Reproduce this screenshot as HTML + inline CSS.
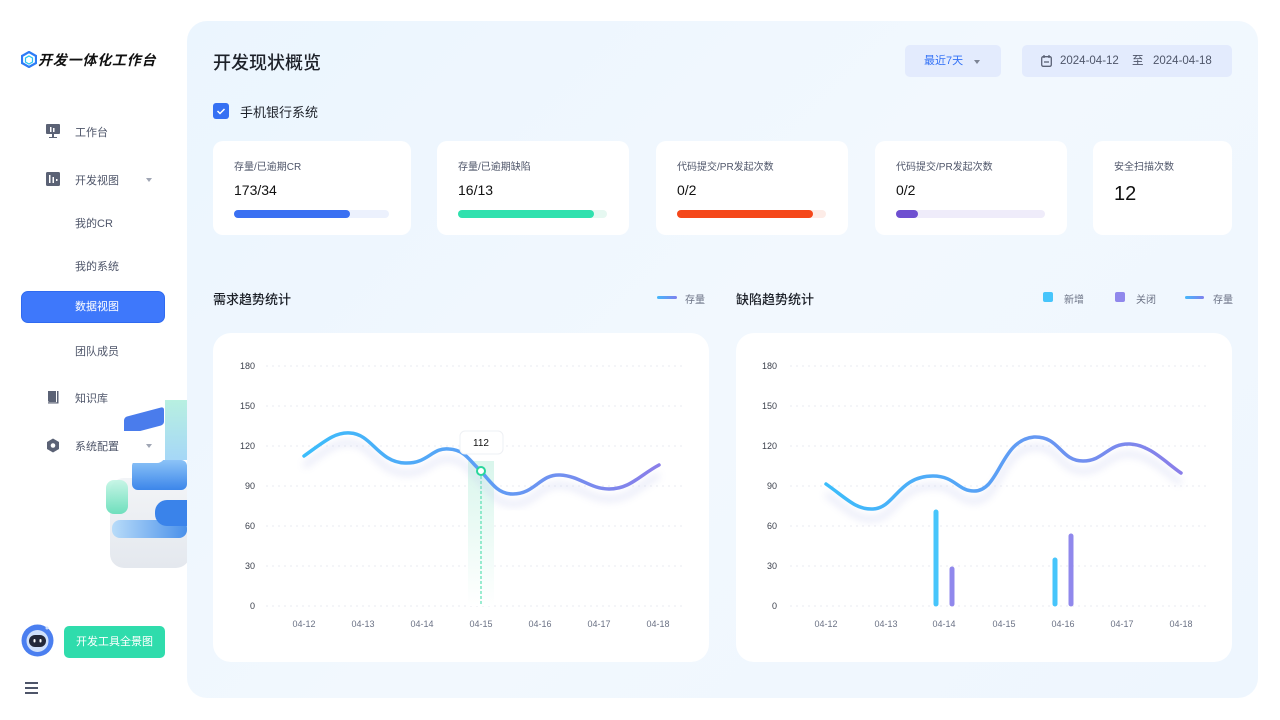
<!DOCTYPE html>
<html><head><meta charset="utf-8">
<style>
*{margin:0;padding:0;box-sizing:border-box}
body{width:1280px;height:720px;background:#fff;font-family:"Liberation Sans","Noto Sans CJK SC",sans-serif;position:relative;overflow:hidden;color:#1d2129}
.abs{position:absolute}
.nav{position:absolute;left:75px;font-size:11px;color:#4e5569}
.main{position:absolute;left:187px;top:21px;width:1071px;height:677px;border-radius:20px;background:linear-gradient(135deg,#ebf5fe,#f2f8fe 50%,#eef6fe)}
.card{position:absolute;background:#fff;border-radius:10px;top:141px;height:94px}
.card .t{position:absolute;left:21px;top:17px;font-size:10px;color:#4e5569}
.card .v{position:absolute;left:21px;top:41px;font-size:14px;color:#111}
.card .bar{position:absolute;left:21px;top:69px;height:8px;border-radius:4px}
.card .fill{position:absolute;left:0;top:0;height:8px;border-radius:4px}
.chart{position:absolute;top:333px;width:496px;height:329px;background:#fff;border-radius:18px}
</style></head><body>
<svg class="abs" style="left:21px;top:51px" width="16" height="17" viewBox="0 0 16 17"><polygon points="8,1 15,5 15,12 8,16 1,12 1,5" fill="none" stroke="#2d7cf6" stroke-width="2.2"/><polygon points="8,5 11.5,7 11.5,11 8,13 4.5,11 4.5,7" fill="#fff" stroke="#29c6f0" stroke-width="1.2"/></svg>
<div class="abs" style="left:38px;top:50px;font-size:14px;font-weight:bold;font-style:italic;color:#111;letter-spacing:0.8px">开发一体化工作台</div>

<svg class="abs" style="left:46px;top:124px" width="14" height="14" viewBox="0 0 14 14"><rect x="0" y="0" width="14" height="10" rx="1" fill="#5b6275"/><rect x="6" y="10" width="2" height="3" fill="#5b6275"/><rect x="3" y="13" width="8" height="1" fill="#5b6275"/><rect x="4" y="3" width="1.5" height="5" fill="#fff"/><rect x="7" y="4" width="1.5" height="4" fill="#fff"/></svg>
<div class="nav" style="top:124px">工作台</div>
<svg class="abs" style="left:46px;top:172px" width="14" height="14" viewBox="0 0 14 14"><rect width="14" height="14" rx="1.5" fill="#5b6275"/><rect x="3" y="3" width="1.5" height="8" fill="#fff"/><rect x="6.5" y="5" width="1.5" height="6" fill="#fff"/><rect x="10" y="7" width="1.5" height="2" fill="#fff"/></svg>
<div class="nav" style="top:172px">开发视图</div>
<div class="abs" style="left:146px;top:178px;width:0;height:0;border-left:3.5px solid transparent;border-right:3.5px solid transparent;border-top:4px solid #a0a6b4"></div>
<div class="nav" style="top:215px">我的CR</div>
<div class="nav" style="top:258px">我的系统</div>
<div class="abs" style="left:21px;top:291px;width:144px;height:32px;background:#3e78fb;border-radius:7px;border:1px solid #2f6af0;color:#fff;font-size:11px;line-height:30px;padding-left:53px">数据视图</div>
<div class="nav" style="top:343px">团队成员</div>

<!-- 3D decoration -->
<div class="abs" style="left:110px;top:478px;width:80px;height:90px;border-radius:14px;background:linear-gradient(180deg,#f2f4f7,#e4e8ee);"></div>
<div class="abs" style="left:112px;top:520px;width:75px;height:18px;border-radius:8px;background:linear-gradient(90deg,#b8dcf9,#4a90ea)"></div>
<div class="abs" style="left:106px;top:480px;width:22px;height:34px;border-radius:8px;background:linear-gradient(180deg,#bff5e3,#58dcb3);opacity:.85"></div>
<div class="abs" style="left:155px;top:500px;width:32px;height:26px;border-radius:12px 0 0 12px;background:#3a83ea"></div>
<div class="abs" style="left:132px;top:460px;width:55px;height:30px;background:linear-gradient(180deg,#8cc3f7,#3c86ea);border-radius:6px"></div>
<div class="abs" style="left:124px;top:412px;width:40px;height:18px;background:#4a7cec;transform:skewY(-15deg);border-radius:3px"></div>
<div class="abs" style="left:165px;top:400px;width:22px;height:60px;background:linear-gradient(180deg,#a6ecd9,#8fcdf5);opacity:.8"></div>
<div class="abs" style="left:100px;top:431px;width:65px;height:32px;background:#fff;border-radius:0 0 8px 8px"></div>

<svg class="abs" style="left:46px;top:390px" width="14" height="14" viewBox="0 0 14 14"><path d="M2 1h8v11H3.5A1.5 1.5 0 0 1 2 10.5z" fill="#5b6275"/><rect x="11" y="1" width="1.5" height="12" fill="#5b6275"/><rect x="2" y="12.3" width="10.5" height="1.2" fill="#5b6275"/></svg>
<div class="nav" style="top:390px">知识库</div>
<svg class="abs" style="left:46px;top:438px" width="14" height="15" viewBox="0 0 14 15"><polygon points="7,0.5 13,4 13,11 7,14.5 1,11 1,4" fill="#5b6275"/><circle cx="7" cy="7.5" r="2.3" fill="#fff"/></svg>
<div class="nav" style="top:438px">系统配置</div>
<div class="abs" style="left:146px;top:444px;width:0;height:0;border-left:3.5px solid transparent;border-right:3.5px solid transparent;border-top:4px solid #a0a6b4"></div>

<svg class="abs" style="left:21px;top:624px" width="33" height="33" viewBox="0 0 33 33"><circle cx="16.5" cy="16.5" r="16" fill="#4b7ff0"/><circle cx="16.5" cy="17" r="11" fill="#cfe0fb"/><rect x="8" y="11" width="17" height="12" rx="6" fill="#23283a"/><rect x="12.5" y="15" width="2" height="3.5" rx="1" fill="#fff"/><rect x="18.5" y="15" width="2" height="3.5" rx="1" fill="#fff"/><circle cx="26" cy="4" r="1.5" fill="#cfe0fb"/></svg>
<div class="abs" style="left:64px;top:626px;width:101px;height:32px;background:#2fdcac;border-radius:5px;color:#fff;font-size:11px;text-align:center;line-height:32px">开发工具全景图</div>
<div class="abs" style="left:25px;top:682px;width:13px;height:1.5px;background:#4e5569;box-shadow:0 5px 0 #4e5569,0 10px 0 #4e5569"></div>

<div class="main"></div>
<div class="abs" style="left:213px;top:49px;font-size:18px;font-weight:500;color:#1d2129">开发现状概览</div>
<div class="abs" style="left:905px;top:45px;width:96px;height:32px;background:#e3ebfd;border-radius:5px;font-size:11px;color:#3170f6;line-height:32px;padding-left:19px">最近7天</div>
<div class="abs" style="left:974px;top:60px;border-left:3.5px solid transparent;border-right:3.5px solid transparent;border-top:4px solid #7d8494"></div>
<div class="abs" style="left:1022px;top:45px;width:210px;height:32px;background:#e3ebfd;border-radius:5px;font-size:11.5px;color:#4e5569;line-height:32px">
<svg class="abs" style="left:19px;top:10px" width="11" height="12" viewBox="0 0 11 12"><rect x="0.7" y="1.7" width="9.6" height="9.6" rx="1.5" fill="none" stroke="#5b6275" stroke-width="1.3"/><line x1="3" y1="0" x2="3" y2="3" stroke="#5b6275" stroke-width="1.3"/><line x1="8" y1="0" x2="8" y2="3" stroke="#5b6275" stroke-width="1.3"/><line x1="3" y1="7" x2="8" y2="7" stroke="#5b6275" stroke-width="1.3"/></svg>
<span class="abs" style="left:38px">2024-04-12</span><span class="abs" style="left:110px">至</span><span class="abs" style="left:131px">2024-04-18</span></div>

<div class="abs" style="left:213px;top:103px;width:16px;height:16px;border-radius:3px;background:#3570f3"><svg width="16" height="16"><path d="M4.5 8l2.5 2.5 4.5-4.5" fill="none" stroke="#fff" stroke-width="1.5"/></svg></div>
<div class="abs" style="left:240px;top:102px;font-size:13px;color:#1d2129">手机银行系统</div>

<div class="card" style="left:213px;width:198px"><div class="t">存量/已逾期CR</div><div class="v">173/34</div><div class="bar" style="width:155px;background:#ecf1fd"><div class="fill" style="width:116px;background:#3a70f2"></div></div></div>
<div class="card" style="left:437px;width:192px"><div class="t">存量/已逾期缺陷</div><div class="v">16/13</div><div class="bar" style="width:149px;background:#e6f8f1"><div class="fill" style="width:136px;background:#30e1ae"></div></div></div>
<div class="card" style="left:656px;width:192px"><div class="t">代码提交/PR发起次数</div><div class="v">0/2</div><div class="bar" style="width:149px;background:#fdece7"><div class="fill" style="width:136px;background:#f5471a"></div></div></div>
<div class="card" style="left:875px;width:192px"><div class="t">代码提交/PR发起次数</div><div class="v">0/2</div><div class="bar" style="width:149px;background:#efecfa"><div class="fill" style="width:22px;background:#6e4fd0"></div></div></div>
<div class="card" style="left:1093px;width:139px"><div class="t">安全扫描次数</div><div class="v" style="font-size:20px;top:42px">12</div></div>

<div class="abs" style="left:213px;top:289px;font-size:13px;font-weight:500">需求趋势统计</div>
<div class="abs" style="left:657px;top:296px;width:20px;height:3px;border-radius:2px;background:linear-gradient(90deg,#45b8fb,#7f80ee)"></div>
<div class="abs" style="left:685px;top:291px;font-size:10px;color:#6b7285">存量</div>
<div class="abs" style="left:736px;top:289px;font-size:13px;font-weight:500">缺陷趋势统计</div>
<div class="abs" style="left:1043px;top:292px;width:10px;height:10px;border-radius:2px;background:#47c5fb"></div>
<div class="abs" style="left:1064px;top:291px;font-size:10px;color:#6b7285">新增</div>
<div class="abs" style="left:1115px;top:292px;width:10px;height:10px;border-radius:2px;background:#9088ec"></div>
<div class="abs" style="left:1136px;top:291px;font-size:10px;color:#6b7285">关闭</div>
<div class="abs" style="left:1185px;top:296px;width:19px;height:3px;border-radius:2px;background:linear-gradient(90deg,#45b8fb,#7f80ee)"></div>
<div class="abs" style="left:1213px;top:291px;font-size:10px;color:#6b7285">存量</div>

<div class="chart" style="left:213px"></div>
<div class="chart" style="left:736px"></div>

<svg class="abs" style="left:0;top:0" width="1280" height="720" font-family="Liberation Sans, sans-serif" font-size="9">
<defs>
<linearGradient id="lg" x1="0" x2="1"><stop offset="0" stop-color="#3cbdfb"/><stop offset="0.5" stop-color="#5d9ef5"/><stop offset="1" stop-color="#8a7ee9"/></linearGradient>
<linearGradient id="hg" x1="0" y1="0" x2="0" y2="1"><stop offset="0" stop-color="#d9f6ec"/><stop offset="1" stop-color="#fff"/></linearGradient>
<filter id="bl"><feGaussianBlur stdDeviation="4"/></filter>
</defs>
<g stroke="#e9ebf0" stroke-dasharray="2 4" stroke-width="1">
<line x1="266" y1="366" x2="684" y2="366"/><line x1="266" y1="406" x2="684" y2="406"/><line x1="266" y1="446" x2="684" y2="446"/><line x1="266" y1="486" x2="684" y2="486"/><line x1="266" y1="526" x2="684" y2="526"/><line x1="266" y1="566" x2="684" y2="566"/><line x1="266" y1="606" x2="684" y2="606"/>
<line x1="790" y1="366" x2="1206" y2="366"/><line x1="790" y1="406" x2="1206" y2="406"/><line x1="790" y1="446" x2="1206" y2="446"/><line x1="790" y1="486" x2="1206" y2="486"/><line x1="790" y1="526" x2="1206" y2="526"/><line x1="790" y1="566" x2="1206" y2="566"/><line x1="790" y1="606" x2="1206" y2="606"/>
</g>
<g fill="#3a3f4b" text-anchor="end">
<text x="255" y="369">180</text><text x="255" y="409">150</text><text x="255" y="449">120</text><text x="255" y="489">90</text><text x="255" y="529">60</text><text x="255" y="569">30</text><text x="255" y="609">0</text>
<text x="777" y="369">180</text><text x="777" y="409">150</text><text x="777" y="449">120</text><text x="777" y="489">90</text><text x="777" y="529">60</text><text x="777" y="569">30</text><text x="777" y="609">0</text>
</g>
<g fill="#6b7285" text-anchor="middle">
<text x="304" y="627">04-12</text><text x="363" y="627">04-13</text><text x="422" y="627">04-14</text><text x="481" y="627">04-15</text><text x="540" y="627">04-16</text><text x="599" y="627">04-17</text><text x="658" y="627">04-18</text>
<text x="826" y="627">04-12</text><text x="886" y="627">04-13</text><text x="944" y="627">04-14</text><text x="1004" y="627">04-15</text><text x="1063" y="627">04-16</text><text x="1122" y="627">04-17</text><text x="1181" y="627">04-18</text>
</g>
<rect x="468" y="461" width="26" height="145" fill="url(#hg)"/>
<line x1="481" y1="471" x2="481" y2="606" stroke="#38d9a4" stroke-dasharray="3 2"/>
<path d="M304 456 C325 441 335 432 350 433 C372 434 378 462 405 463 C428 464 432 447 449 449 C466 450 470 462 481 471 C494 487 500 494 513 494 C535 494 540 474 560 475 C580 476 590 489 609 489 C630 489 640 475 659 465" fill="none" stroke="#c6cbef" stroke-width="5" filter="url(#bl)" transform="translate(0,10)" opacity=".45"/>
<path d="M304 456 C325 441 335 432 350 433 C372 434 378 462 405 463 C428 464 432 447 449 449 C466 450 470 462 481 471 C494 487 500 494 513 494 C535 494 540 474 560 475 C580 476 590 489 609 489 C630 489 640 475 659 465" fill="none" stroke="url(#lg)" stroke-width="3.5" stroke-linecap="round"/>
<circle cx="481" cy="471" r="4" fill="#fff" stroke="#28d69b" stroke-width="2"/>
<rect x="460" y="431" width="43" height="23" rx="5" fill="#fff" stroke="#eef0f4"/>
<text x="481" y="446" text-anchor="middle" font-size="10" fill="#111">112</text>
<path d="M826 484 C846 498 856 510 873 509 C895 508 898 476 933 476 C955 476 958 491 974 491 C1000 491 1000 440 1034 437 C1060 436 1060 461 1083 461 C1104 461 1108 443 1130 444 C1150 445 1165 462 1181 473" fill="none" stroke="#c6cbef" stroke-width="5" filter="url(#bl)" transform="translate(0,10)" opacity=".45"/>
<path d="M826 484 C846 498 856 510 873 509 C895 508 898 476 933 476 C955 476 958 491 974 491 C1000 491 1000 440 1034 437 C1060 436 1060 461 1083 461 C1104 461 1108 443 1130 444 C1150 445 1165 462 1181 473" fill="none" stroke="url(#lg)" stroke-width="3.5" stroke-linecap="round"/>
<g stroke-width="5" stroke-linecap="round">
<line x1="936" y1="512" x2="936" y2="604" stroke="#47c5fb"/>
<line x1="952" y1="569" x2="952" y2="604" stroke="#9088ec"/>
<line x1="1055" y1="560" x2="1055" y2="604" stroke="#47c5fb"/>
<line x1="1071" y1="536" x2="1071" y2="604" stroke="#9088ec"/>
</g>
</svg>
</body></html>
